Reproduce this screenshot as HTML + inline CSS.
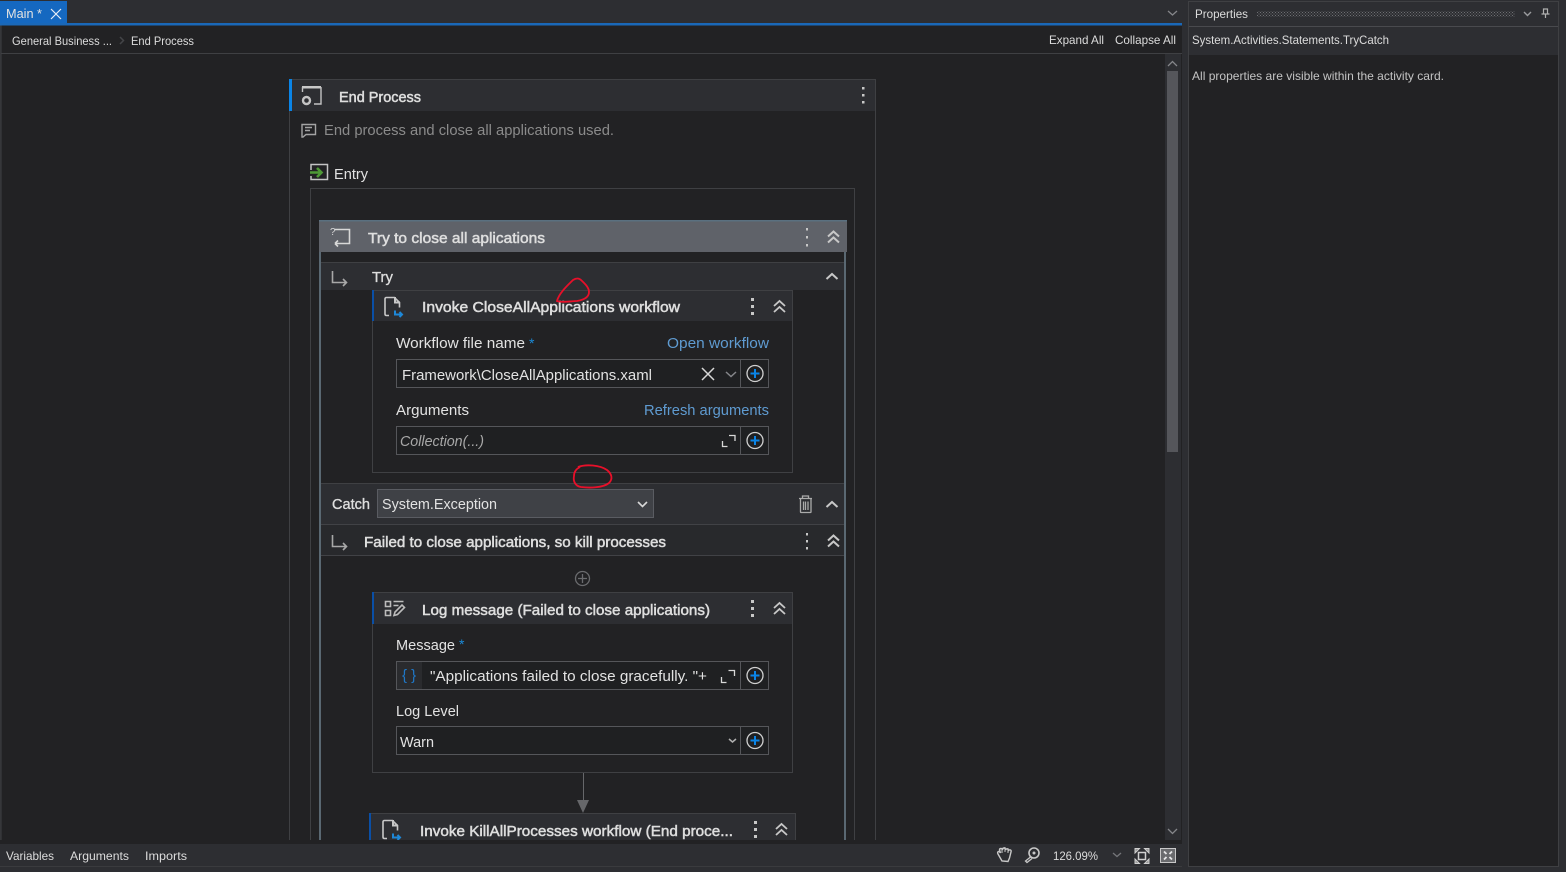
<!DOCTYPE html>
<html><head><meta charset="utf-8"><style>
html,body{margin:0;padding:0;background:#2d2e32;width:1566px;height:872px;overflow:hidden}
svg{display:block}
text{font-family:"Liberation Sans",sans-serif;font-size:14px;fill:#e2e2e2}
.s{font-size:12px;fill:#dcdcdc}
.b{fill:#dedede;stroke:#dedede;stroke-width:.5px;font-size:14.5px}
.l{fill:#5f9bd1}
.i{fill:none;stroke:#c4c4c4;stroke-width:1.6}
.a{fill:none;stroke:#c8c8c8;stroke-width:1.5}
.p{fill:none;stroke:#d0d0d0;stroke-width:1.3}
.q{fill:none;stroke:#0a84e6;stroke-width:2}
.f{fill:#1f2022;stroke:#55565a;stroke-width:1}
</style></head><body>
<svg width="1566" height="872" viewBox="0 0 1566 872" xmlns="http://www.w3.org/2000/svg">
<defs>
<clipPath id="c"><rect x="0" y="54" width="1165" height="786"/></clipPath>
<pattern id="dots" width="3" height="3" patternUnits="userSpaceOnUse"><rect width="1" height="1" fill="#6e6f73"/><rect x="1.500" y="1.500" width="1" height="1" fill="#6e6f73"/></pattern>
</defs>
<rect width="1566" height="872" fill="#2d2e32"/>
<!-- main doc -->
<rect x="1" y="25" width="1181" height="819" fill="#222224"/>
<rect x="0.5" y="25" width="1" height="819" fill="#3f4043"/>
<rect x="0" y="23" width="1182" height="2.500" fill="#1a68b8"/>
<rect x="0" y="1" width="67" height="22" fill="#1568c0"/>
<text x="6" y="18" textLength="36" lengthAdjust="spacingAndGlyphs" style="font-size:13px" fill="#fff">Main *</text>
<path d="M51 9l10 10M61 9l-10 10" stroke="#e8eef6" stroke-width="1.200" fill="none"/>
<path d="M1168 11l4.500 4 4.500-4" stroke="#85868a" stroke-width="1.300" fill="none"/>
<rect x="1" y="53" width="1181" height="1" fill="#3f4043"/>
<text class="s" x="12" y="45" textLength="100" lengthAdjust="spacingAndGlyphs">General Business ...</text>
<path d="M120 37l3.500 3.500-3.500 3.500" stroke="#444548" stroke-width="1.500" fill="none"/>
<text class="s" x="131" y="45" textLength="63" lengthAdjust="spacingAndGlyphs">End Process</text>
<text class="s" x="1049" y="44" textLength="55" lengthAdjust="spacingAndGlyphs">Expand All</text>
<text class="s" x="1115" y="44" textLength="61" lengthAdjust="spacingAndGlyphs">Collapse All</text>
<!-- scrollbar -->
<rect x="1165" y="54" width="16" height="786" fill="#2d2e32"/>
<rect x="1167" y="71" width="11" height="381" fill="#55565b"/>
<path d="M1168 66l4.500-4.500 4.500 4.500M1168 829l4.500 4.500 4.500-4.500" stroke="#85868a" stroke-width="1.300" fill="none"/>
<!-- canvas -->
<g clip-path="url(#c)">
<rect x="289.500" y="79.500" width="586" height="800" fill="#222224" stroke="#3f4043"/>
<rect x="290" y="80" width="585" height="31" fill="#2d2e32"/>
<rect x="289" y="79" width="3" height="32" fill="#0a84e6"/>
<rect x="302" y="86" width="19" height="2.500" fill="#c8c8c8"/>
<path d="M302.500 87v5M321 87v17h-7" class="i" style="stroke-width:1.400"/>
<circle cx="306.500" cy="100.500" r="3.500" class="i" style="stroke-width:2.400"/>
<text class="b" x="339" y="102" textLength="82" lengthAdjust="spacingAndGlyphs">End Process</text>
<g fill="#c8c8c8"><rect x="862" y="87" width="2.500" height="2.500"/><rect x="862" y="94" width="2.500" height="2.500"/><rect x="862" y="101" width="2.500" height="2.500"/></g>
<path d="M302 124.500h13.500v10h-9.500l-3 2.500h-1zM305 127.500h7M305 130.500h5" class="i" style="stroke:#a4a4a4;stroke-width:1.400"/>
<text x="324" y="135" textLength="290" lengthAdjust="spacingAndGlyphs" style="fill:#8b8b8b;font-size:14.500px">End process and close all applications used.</text>
<path d="M311 170v-5.500h16.500v15H311V176" class="i" style="stroke-width:1.500"/>
<path d="M310 172.500h11M317 168l4.500 4.500-4.500 4.500" fill="none" stroke="#4f9a36" stroke-width="2.600"/>
<text x="334" y="179" textLength="34" lengthAdjust="spacingAndGlyphs" style="font-size:14.500px">Entry</text>
<rect x="310.500" y="188.500" width="544" height="700" fill="#222224" stroke="#3f4043"/>
<!-- Try catch card -->
<rect x="320" y="221" width="525" height="660" fill="#222224" stroke="#5a6872" stroke-width="2"/>
<rect x="319" y="220" width="528" height="32" fill="#5f6269"/>
<rect x="319" y="220" width="528" height="1.500" fill="#5a7080"/>
<path d="M335 229.500h14.500v14H335M335 243.500l3-3M335 243.500l3 3" class="i" style="stroke:#d8d8d8"/>
<text x="330" y="235" style="font-size:10px;fill:#d8d8d8">?</text>
<text class="b" x="368" y="243" textLength="177" lengthAdjust="spacingAndGlyphs">Try to close all aplications</text>
<g fill="#c8c8c8"><rect x="806" y="228" width="2" height="2.500"/><rect x="806" y="236" width="2" height="2.500"/><rect x="806" y="244" width="2" height="2.500"/></g>
<path d="M828 236.500l5.500-5 5.500 5M828 242.500l5.500-5 5.500 5" class="a" style="stroke-width:2"/>
<!-- Try row -->
<rect x="321" y="262" width="523" height="28" fill="#2d2e32"/>
<rect x="321" y="262" width="523" height="1" fill="#3f4043"/>
<path d="M332.500 271v11.500h14M343 279l3.500 3.500-3.500 3.500" class="i" style="stroke:#a8a8a8"/>
<text class="b" x="372" y="282" textLength="21" lengthAdjust="spacingAndGlyphs" style="stroke-width:.3px">Try</text>
<path d="M826.500 279l5.500-5 5.500 5" class="a" style="stroke-width:2"/>
<!-- Invoke card -->
<rect x="372.500" y="290.500" width="420" height="182" fill="#222224" stroke="#3f4043"/>
<rect x="373" y="291" width="419" height="30" fill="#2d2e32"/>
<rect x="372" y="290" width="2" height="31" fill="#0a4fa6"/>
<path d="M389 315.500h-2.500q-1.500 0-1.500-1.500v-15q0-1.500 1.500-1.500h8l5 5v5" class="i" style="stroke:#c8c8c8"/>
<path d="M395 297v5.500h5" fill="none" stroke="#c8c8c8" stroke-width="2"/>
<path d="M395 310.500v4h7M399.500 312l2.500 2.500-2.500 2.500" fill="none" stroke="#1e88d8" stroke-width="2"/>
<text class="b" x="422" y="312" textLength="258" lengthAdjust="spacingAndGlyphs">Invoke CloseAllApplications workflow</text>
<g fill="#c8c8c8"><rect x="751" y="298" width="3" height="3"/><rect x="751" y="305" width="3" height="3"/><rect x="751" y="312" width="3" height="3"/></g>
<path d="M774 306l5.500-5 5.500 5M774 312l5.500-5 5.500 5" class="a" style="stroke-width:1.800"/>
<text x="396" y="348" textLength="129" lengthAdjust="spacingAndGlyphs" style="font-size:14.500px">Workflow file name</text>
<text x="529" y="348" style="fill:#1a8ad8;font-size:14px">*</text>
<text class="l" x="667" y="348" textLength="102" lengthAdjust="spacingAndGlyphs" style="font-size:14.500px">Open workflow</text>
<rect class="f" x="396.500" y="359.500" width="344" height="28"/>
<rect class="f" x="740.500" y="359.500" width="28" height="28"/>
<text x="402" y="380" textLength="250" lengthAdjust="spacingAndGlyphs" style="font-size:14.500px">Framework\CloseAllApplications.xaml</text>
<path d="M702 368l12 12M714 368l-12 12" stroke="#d8d8d8" stroke-width="1.500" fill="none"/>
<path d="M726 372l5 4.500 5-4.500" stroke="#85868a" stroke-width="1.500" fill="none"/>
<circle cx="755" cy="373.500" r="8" class="p"/><path d="M750.500 373.500h9M755 369v9" class="q"/>
<text x="396" y="415" textLength="73" lengthAdjust="spacingAndGlyphs" style="font-size:14.500px">Arguments</text>
<text class="l" x="644" y="415" textLength="125" lengthAdjust="spacingAndGlyphs" style="font-size:14.500px">Refresh arguments</text>
<rect class="f" x="396.500" y="426.500" width="344" height="28"/>
<rect class="f" x="740.500" y="426.500" width="28" height="28"/>
<text x="400" y="446" textLength="84" lengthAdjust="spacingAndGlyphs" style="font-size:14.500px;font-style:italic;fill:#a8a8a8">Collection(...)</text>
<path d="M722.500 441v5.500h5M729 435.500h6v5.500" class="i" style="stroke:#d8d8d8;stroke-width:1.300"/>
<circle cx="755" cy="440.500" r="8" class="p"/><path d="M750.500 440.500h9M755 436v9" class="q"/>
<!-- Catch row -->
<rect x="321" y="484" width="523" height="41" fill="#2d2e32"/>
<rect x="321" y="483" width="523" height="1" fill="#3f4043"/>
<rect x="321" y="524" width="523" height="1" fill="#414246"/>
<text class="b" x="332" y="509" textLength="38" lengthAdjust="spacingAndGlyphs" style="stroke-width:.35px">Catch</text>
<rect x="377.500" y="489.500" width="276" height="28" fill="#3f4146" stroke="#5a5c62"/>
<text x="382" y="509" textLength="115" lengthAdjust="spacingAndGlyphs" style="font-size:14.500px">System.Exception</text>
<path d="M638 502l4.500 4.500 4.500-4.500" stroke="#d8d8d8" stroke-width="1.600" fill="none"/>
<path d="M799 498.500h13M802.500 498.500v-2.500h6v2.500M800.500 498.500v13.500q0 .5 .5 .5h9.500q.5 0 .5-.5v-13.500M803.500 501.500v8.500M805.500 501.500v8.500M808 501.500v8.500" class="i" style="stroke:#ababab;stroke-width:1.300"/>
<path d="M826.500 507l5.500-5 5.500 5" class="a" style="stroke-width:2"/>
<!-- Failed row -->
<rect x="321" y="525" width="523" height="30" fill="#28292c"/>
<rect x="321" y="555" width="523" height="1" fill="#414246"/>
<path d="M332.500 535v11.500h14M343 543l3.500 3.500-3.500 3.500" class="i" style="stroke:#a8a8a8"/>
<text class="b" x="364" y="547" textLength="302" lengthAdjust="spacingAndGlyphs">Failed to close applications, so kill processes</text>
<g fill="#c8c8c8"><rect x="806" y="533" width="2" height="2.500"/><rect x="806" y="540" width="2" height="2.500"/><rect x="806" y="547" width="2" height="2.500"/></g>
<path d="M828 540.500l5.500-5 5.500 5M828 546.500l5.500-5 5.500 5" class="a" style="stroke-width:2"/>
<circle cx="582.500" cy="578.500" r="7" fill="none" stroke="#6a6b6e" stroke-width="1.300"/><path d="M578 578.500h9M582.500 574v9" stroke="#6a6b6e" stroke-width="1.300" fill="none"/>
<!-- Log card -->
<rect x="372.500" y="592.500" width="420" height="180" fill="#222224" stroke="#3f4043"/>
<rect x="373" y="593" width="419" height="31" fill="#2d2e32"/>
<rect x="372" y="592" width="2" height="32" fill="#0a4fa6"/>
<path d="M385.500 601.500h5v5h-5zM385.500 610.500h5v5h-5zM393.500 601.500h10M393.500 605.500h5" class="i" style="stroke:#bcbcbc"/>
<path d="M394 615.500l1-3.500 7-7 2.500 2.500-7 7z" class="i" style="stroke:#bcbcbc"/>
<text class="b" x="422" y="615" textLength="288" lengthAdjust="spacingAndGlyphs">Log message (Failed to close applications)</text>
<g fill="#c8c8c8"><rect x="751" y="600" width="3" height="3"/><rect x="751" y="607" width="3" height="3"/><rect x="751" y="614" width="3" height="3"/></g>
<path d="M774 608l5.500-5 5.500 5M774 614l5.500-5 5.500 5" class="a" style="stroke-width:1.800"/>
<text x="396" y="650" textLength="59" lengthAdjust="spacingAndGlyphs" style="font-size:14.500px">Message</text>
<text x="459" y="649" style="fill:#1a8ad8;font-size:14px">*</text>
<rect class="f" x="396.500" y="661.500" width="344" height="28"/>
<rect class="f" x="740.500" y="661.500" width="28" height="28"/>
<rect x="397" y="662" width="25" height="27" fill="#2a2b2e"/>
<text x="402" y="680" style="font-size:15px;fill:#1f78c8">{ }</text>
<text x="430" y="681" textLength="277" lengthAdjust="spacingAndGlyphs" style="font-size:14.500px">"Applications failed to close gracefully. "+</text>
<path d="M721.500 677v5.500h5M728.500 670.500h6v5.500" class="i" style="stroke:#d8d8d8;stroke-width:1.300"/>
<circle cx="755" cy="675.500" r="8" class="p"/><path d="M750.500 675.500h9M755 671v9" class="q"/>
<text x="396" y="716" textLength="63" lengthAdjust="spacingAndGlyphs" style="font-size:14.500px">Log Level</text>
<rect class="f" x="396.500" y="726.500" width="344" height="28"/>
<rect class="f" x="740.500" y="726.500" width="28" height="28"/>
<text x="400" y="747" textLength="34" lengthAdjust="spacingAndGlyphs" style="font-size:14.500px">Warn</text>
<path d="M729 739l3.500 3 3.500-3" stroke="#b0b0b0" stroke-width="1.500" fill="none"/>
<circle cx="755" cy="740.500" r="8" class="p"/><path d="M750.500 740.500h9M755 736v9" class="q"/>
<!-- connector -->
<rect x="583" y="773" width="1" height="28" fill="#66676a"/>
<path d="M577 800h12l-6 13z" fill="#66676a"/>
<!-- Kill card -->
<rect x="369.500" y="813.500" width="426" height="60" fill="#2d2e32" stroke="#3f4043"/>
<rect x="369" y="813" width="2" height="40" fill="#0a4fa6"/>
<path d="M387 838.500h-2.500q-1.500 0-1.500-1.500v-15q0-1.500 1.500-1.500h8l5 5v5" class="i" style="stroke:#c8c8c8"/>
<path d="M393 820v5.500h5" fill="none" stroke="#c8c8c8" stroke-width="2"/>
<path d="M393 833.500v4h7M397.500 835l2.500 2.500-2.500 2.500" fill="none" stroke="#1e88d8" stroke-width="2"/>
<text class="b" x="420" y="836" textLength="313" lengthAdjust="spacingAndGlyphs">Invoke KillAllProcesses workflow (End proce...</text>
<g fill="#c8c8c8"><rect x="754" y="821" width="3" height="3"/><rect x="754" y="828" width="3" height="3"/><rect x="754" y="835" width="3" height="3"/></g>
<path d="M776 829l5.500-5 5.500 5M776 835l5.500-5 5.500 5" class="a" style="stroke-width:1.800"/>
</g>
<!-- red scribbles -->
<path d="M557 301c2-8 11-16 16-21 3-2 6-2 8 0 3 3 8 7 8 12 0 6-6 8-12 9-6 0-14 2-20 0z" fill="none" stroke="#e8102a" stroke-width="1.800"/>
<path d="M578 467c8-3 22-2 29 3 5 4 6 9 2 13-6 5-20 5-28 4-6-1-8-6-7-11 0-4 2-7 6-9z" fill="none" stroke="#e8102a" stroke-width="1.800"/>
<!-- bottom -->
<rect x="0" y="840" width="1182" height="4" fill="#222224"/>
<rect x="0" y="844" width="1182" height="22" fill="#2d2e32"/>
<rect x="0" y="866" width="1566" height="6" fill="#2d2e32"/>
<rect x="0" y="866" width="1182" height="1" fill="#3a3b3e"/>
<text class="s" x="6" y="860" textLength="48" lengthAdjust="spacingAndGlyphs">Variables</text>
<text class="s" x="70" y="860" textLength="59" lengthAdjust="spacingAndGlyphs">Arguments</text>
<text class="s" x="145" y="860" textLength="42" lengthAdjust="spacingAndGlyphs">Imports</text>
<path d="M1002 861l-4-7q-1-2 .5-2.500 1 0 2 1.500l-1-3q0-1.500 1.500-1.500 1 0 1.500 1.500 0-2 1.500-2t1.500 2q.5-1.500 2-1 1 .5 1 1.500 1-1 2-.5 1 .5 .5 2l-1.500 6-1.500 3.500z" class="i" style="stroke:#c8c8c8;stroke-width:1.400"/>
<path d="M1002 848v5M1005 847v5M1008 848v5" stroke="#c8c8c8" stroke-width="1" fill="none"/>
<circle cx="1034" cy="853" r="5" class="i" style="stroke:#c8c8c8"/><circle cx="1034" cy="853" r="1.500" fill="#c8c8c8"/>
<path d="M1030.500 857l-5 4 1.500 1.500 5-4" class="i" style="stroke:#c8c8c8;stroke-width:1.300"/>
<text class="s" x="1053" y="860" textLength="45" lengthAdjust="spacingAndGlyphs">126.09%</text>
<path d="M1113 853l4 3.500 4-3.500" stroke="#75767a" stroke-width="1.300" fill="none"/>
<rect x="1138.500" y="852.500" width="7" height="7" class="i" style="stroke:#d0d0d0;stroke-width:1.500"/>
<path d="M1135 848.500h4.500l-4.500 4.500zM1149 848.500h-4.500l4.500 4.500zM1135 863.500h4.500l-4.500-4.500zM1149 863.500h-4.500l4.500-4.500z" fill="#9a9a9a" stroke="#d0d0d0" stroke-width="1"/>
<rect x="1160.500" y="848.500" width="15" height="14" fill="#6a6b6e" stroke="#c8c8c8"/>
<path d="M1164 851.500l2.500 2.500M1172 851.500l-2.500 2.500M1164 859.500l2.500-2.500M1172 859.500l-2.500-2.500" stroke="#e8e8e8" stroke-width="1.800" fill="none"/>
<!-- properties panel -->
<rect x="1182" y="0" width="6" height="872" fill="#2d2e32"/>
<rect x="1188.500" y="1.500" width="370" height="865" fill="#222224" stroke="#3f4043"/>
<rect x="1189" y="2" width="369" height="24" fill="#2d2e32"/>
<rect x="1189" y="26" width="369" height="1" fill="#494a4e"/>
<rect x="1189" y="27" width="369" height="28" fill="#2d2e32"/>
<text class="s" x="1195" y="18" textLength="53" lengthAdjust="spacingAndGlyphs">Properties</text>
<rect x="1257" y="11" width="258" height="6" fill="url(#dots)"/>
<path d="M1524 12l3.500 3.500 3.500-3.500" stroke="#9a9b9e" stroke-width="1.400" fill="none"/>
<path d="M1543.500 9h4v5h-4zM1541.500 14h8M1545.500 14v4" stroke="#b0b0b0" stroke-width="1.200" fill="none"/>
<text class="s" x="1192" y="44" textLength="197" lengthAdjust="spacingAndGlyphs">System.Activities.Statements.TryCatch</text>
<text class="s" x="1192" y="80" textLength="252" lengthAdjust="spacingAndGlyphs" style="fill:#c4c4c4">All properties are visible within the activity card.</text>
</svg>
</body></html>
